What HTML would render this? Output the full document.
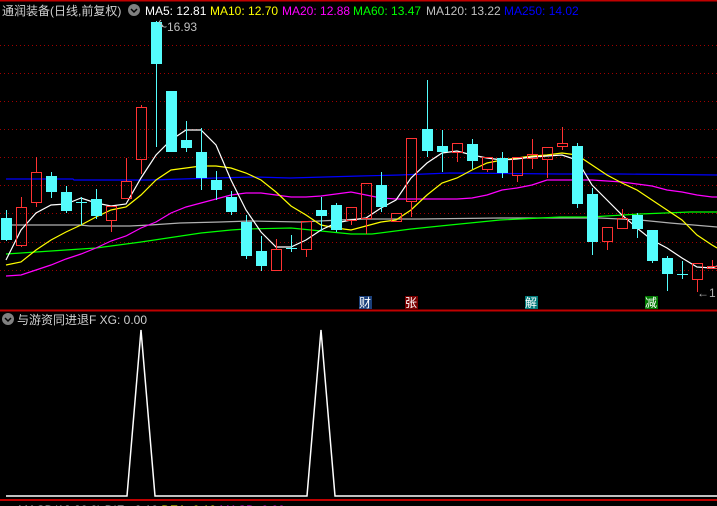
<!DOCTYPE html>
<html><head><meta charset="utf-8"><style>
html,body{margin:0;padding:0;background:#000;width:717px;height:506px;overflow:hidden}
svg{display:block}
text{font-family:"Liberation Sans","Noto Sans CJK SC",sans-serif;font-size:12px}
</style></head><body>
<svg width="717" height="506" xmlns="http://www.w3.org/2000/svg">
<rect width="717" height="506" fill="#000"/>
<line x1="0" y1="0.5" x2="717" y2="0.5" stroke="#c00000" stroke-width="2"/>
<g stroke="#a00000" stroke-dasharray="1,3" stroke-width="1">
<line x1="0" y1="45.5" x2="717" y2="45.5"/><line x1="0" y1="73.5" x2="717" y2="73.5"/>
<line x1="0" y1="101.5" x2="717" y2="101.5"/><line x1="0" y1="129.5" x2="717" y2="129.5"/>
<line x1="0" y1="157.5" x2="717" y2="157.5"/><line x1="0" y1="185.5" x2="717" y2="185.5"/>
<line x1="0" y1="213.5" x2="717" y2="213.5"/><line x1="0" y1="242.5" x2="717" y2="242.5"/>
<line x1="0" y1="270.5" x2="717" y2="270.5"/>
</g>
<!-- header -->
<text x="2" y="15" fill="#d0d0d0" font-size="13">通润装备(日线,前复权)</text>
<circle cx="134" cy="10" r="6" fill="#808080"/><path d="M131 9 L134 12 L137 9" stroke="#000" stroke-width="1.5" fill="none"/>
<text x="145" y="15" fill="#ffffff">MA5: 12.81</text>
<text x="210" y="15" fill="#ffff00">MA10: 12.70</text>
<text x="282" y="15" fill="#ff00ff">MA20: 12.88</text>
<text x="353" y="15" fill="#00ff00">MA60: 13.47</text>
<text x="426" y="15" fill="#c0c0c0">MA120: 13.22</text>
<text x="504" y="15" fill="#0000ff">MA250: 14.02</text>
<!-- MA lines -->
<g fill="none" stroke-width="1.2">
<polyline stroke="#0000ff" points="6,179 73,179 74,180 150,180 215,178 255,177 290,178 360,176 400,175 450,173 560,174 620,174 717,175"/>
<polyline stroke="#b0b0b0" points="6,225 80,225 90,226 130,226 150,225 180,223 220,222 250,221 300,222 360,219 420,219 500,218 560,218 600,218 640,220 670,223 717,227"/>
<polyline stroke="#00ff00" points="6,254 96,248 141,242 201,233 231,230 246,229 291,228 351,234 372,234 411,229 450,225 500,220 560,217 590,217 640,214 690,212 717,212"/>
<polyline stroke="#ff00ff" points="6,276 21,275 36,270 51,265 66,259 81,254 96,248 111,241 126,236 141,228 156,222 171,213 186,207 201,203 216,199 231,195 246,193 261,193 276,195 291,197 306,197 321,196 336,194 351,192 366,195 381,198 396,199 411,199 427,199 442,199 457,199 472,198 487,195 502,190 517,188 532,185 547,180 562,180 577,180 592,180 607,181 622,182 637,184 652,186 667,190 682,192 697,195 712,197 717,197"/>
<polyline stroke="#ffff00" points="6,265 21,262 36,250 51,240 66,232 81,225 96,217 111,210 126,207 141,195 156,180 171,170 186,168 201,166 216,166 231,168 246,173 261,180 276,192 291,206 306,215 321,225 336,228 351,230 366,226 381,222 396,220 411,210 427,195 442,183 457,178 472,170 487,163 502,160 517,158 532,156 547,155 562,153 577,155 592,165 607,175 622,183 637,190 652,200 667,210 682,220 697,235 712,245 717,248"/>
<polyline stroke="#ffffff" points="6,260 21,230 36,213 51,205 66,204 81,198 96,203 111,206 126,204 141,178 156,155 171,140 186,130 201,130 216,145 231,180 246,210 261,232 276,247 291,247 306,240 321,230 336,223 351,220 366,218 381,208 396,200 411,178 427,163 442,153 457,151 472,155 487,158 502,160 517,159 532,157 547,156 562,155 577,160 592,185 607,200 622,215 637,228 652,240 667,248 682,258 697,267 712,268 717,266"/>
</g>
<!-- cyan candles -->
<g fill="#54fcfc" stroke="#54fcfc">
<line x1="6.5" y1="210" x2="6.5" y2="241"/><rect x="1" y="218" width="11" height="22" stroke="none"/>
<line x1="51.5" y1="172" x2="51.5" y2="198"/><rect x="46" y="176" width="11" height="16" stroke="none"/>
<line x1="66.5" y1="186" x2="66.5" y2="213"/><rect x="61" y="192" width="11" height="19" stroke="none"/>
<line x1="81.5" y1="197" x2="81.5" y2="225"/><line x1="76" y1="202.5" x2="87" y2="202.5"/>
<line x1="96.5" y1="189" x2="96.5" y2="219"/><rect x="91" y="199" width="11" height="17" stroke="none"/>
<line x1="156.5" y1="21" x2="156.5" y2="147"/><rect x="151" y="22" width="11" height="42" stroke="none"/>
<rect x="166" y="91" width="11" height="61" stroke="none"/>
<line x1="186.5" y1="121" x2="186.5" y2="152"/><rect x="181" y="140" width="11" height="8" stroke="none"/>
<line x1="201.5" y1="128" x2="201.5" y2="190"/><rect x="196" y="152" width="11" height="26" stroke="none"/>
<line x1="216.5" y1="171" x2="216.5" y2="200"/><rect x="211" y="180" width="11" height="10" stroke="none"/>
<line x1="231.5" y1="191" x2="231.5" y2="215"/><rect x="226" y="197" width="11" height="15" stroke="none"/>
<line x1="246.5" y1="215" x2="246.5" y2="259"/><rect x="241" y="222" width="11" height="34" stroke="none"/>
<line x1="261.5" y1="236" x2="261.5" y2="271"/><rect x="256" y="251" width="11" height="15" stroke="none"/>
<line x1="291.5" y1="235" x2="291.5" y2="252"/><line x1="286" y1="248.5" x2="297" y2="248.5"/>
<line x1="321.5" y1="197" x2="321.5" y2="231"/><rect x="316" y="210" width="11" height="6" stroke="none"/>
<line x1="336.5" y1="203" x2="336.5" y2="232"/><rect x="331" y="205" width="11" height="25" stroke="none"/>
<line x1="381.5" y1="172" x2="381.5" y2="212"/><rect x="376" y="185" width="11" height="22" stroke="none"/>
<line x1="427.5" y1="80" x2="427.5" y2="157"/><rect x="422" y="129" width="11" height="22" stroke="none"/>
<line x1="442.5" y1="130" x2="442.5" y2="172"/><rect x="437" y="146" width="11" height="6" stroke="none"/>
<line x1="472.5" y1="139" x2="472.5" y2="169"/><rect x="467" y="144" width="11" height="17" stroke="none"/>
<line x1="502.5" y1="152" x2="502.5" y2="178"/><rect x="497" y="158" width="11" height="15" stroke="none"/>
<line x1="577.5" y1="143" x2="577.5" y2="208"/><rect x="572" y="146" width="11" height="58" stroke="none"/>
<line x1="592.5" y1="188" x2="592.5" y2="255"/><rect x="587" y="194" width="11" height="48" stroke="none"/>
<line x1="637.5" y1="213" x2="637.5" y2="238"/><rect x="632" y="215" width="11" height="14" stroke="none"/>
<line x1="652.5" y1="230" x2="652.5" y2="263"/><rect x="647" y="230" width="11" height="31" stroke="none"/>
<line x1="667.5" y1="256" x2="667.5" y2="291"/><rect x="662" y="258" width="11" height="16" stroke="none"/>
<line x1="682.5" y1="261" x2="682.5" y2="279"/><line x1="677" y1="274.5" x2="688" y2="274.5"/>
</g>
<!-- red candles -->
<g fill="none" stroke="#ff3232">
<line x1="21.5" y1="197" x2="21.5" y2="207"/><line x1="21.5" y1="246" x2="21.5" y2="247"/><rect x="16.5" y="207.5" width="10" height="38"/>
<line x1="36.5" y1="157" x2="36.5" y2="172"/><line x1="36.5" y1="203" x2="36.5" y2="207"/><rect x="31.5" y="172.5" width="10" height="30"/>
<line x1="111.5" y1="221" x2="111.5" y2="232"/><rect x="106.5" y="206.5" width="10" height="14"/>
<line x1="126.5" y1="158" x2="126.5" y2="181"/><rect x="121.5" y="181.5" width="10" height="17"/>
<line x1="141.5" y1="105" x2="141.5" y2="107"/><line x1="141.5" y1="160" x2="141.5" y2="174"/><rect x="136.5" y="107.5" width="10" height="52"/>
<line x1="276.5" y1="239" x2="276.5" y2="249"/><rect x="271.5" y="249.5" width="10" height="21"/>
<line x1="306.5" y1="250" x2="306.5" y2="257"/><rect x="301.5" y="221.5" width="10" height="28"/>
<line x1="351.5" y1="221" x2="351.5" y2="225"/><rect x="346.5" y="207.5" width="10" height="13"/>
<line x1="366.5" y1="219" x2="366.5" y2="234"/><rect x="361.5" y="183.5" width="10" height="35"/>
<rect x="391.5" y="213.5" width="10" height="8"/>
<line x1="411.5" y1="202" x2="411.5" y2="217"/><rect x="406.5" y="138.5" width="10" height="63"/>
<line x1="457.5" y1="153" x2="457.5" y2="162"/><rect x="452.5" y="143.5" width="10" height="9"/>
<line x1="487.5" y1="170" x2="487.5" y2="172"/><rect x="482.5" y="157.5" width="10" height="12"/>
<line x1="517.5" y1="176" x2="517.5" y2="182"/><rect x="512.5" y="157.5" width="10" height="18"/>
<line x1="532.5" y1="139" x2="532.5" y2="154"/><line x1="532.5" y1="159" x2="532.5" y2="169"/><rect x="527.5" y="154.5" width="10" height="4"/>
<line x1="547.5" y1="160" x2="547.5" y2="178"/><rect x="542.5" y="147.5" width="10" height="12"/>
<line x1="562.5" y1="127" x2="562.5" y2="143"/><line x1="562.5" y1="146" x2="562.5" y2="150"/><rect x="557.5" y="143.5" width="10" height="3"/>
<line x1="607.5" y1="242" x2="607.5" y2="250"/><rect x="602.5" y="227.5" width="10" height="14"/>
<line x1="622.5" y1="209" x2="622.5" y2="218"/><rect x="617.5" y="218.5" width="10" height="10"/>
<line x1="697.5" y1="280" x2="697.5" y2="292"/><rect x="692.5" y="263.5" width="10" height="16"/>
<line x1="712.5" y1="260" x2="712.5" y2="267"/><rect x="707.5" y="266.5" width="10" height="2"/>
</g>
<!-- max label -->
<path d="M159 22 L163 26 M159 22 L161 20" stroke="#c0c0c0" fill="none"/>
<text x="160" y="31" fill="#c0c0c0" font-size="12">~16.93</text>
<text x="697" y="297" fill="#b0b0b0" font-size="12">←1</text>
<!-- tags -->
<rect x="359" y="296" width="13" height="13" fill="#1a3f7a"/><text x="359" y="307" fill="#fff" font-size="12">财</text>
<rect x="405" y="296" width="13" height="13" fill="#7a0000"/><text x="405" y="307" fill="#fff" font-size="12">张</text>
<rect x="525" y="296" width="13" height="13" fill="#007a7a"/><text x="525" y="307" fill="#fff" font-size="12">解</text>
<rect x="645" y="296" width="13" height="13" fill="#007a00"/><text x="645" y="307" fill="#fff" font-size="12">减</text>
<!-- lower panel -->
<line x1="0" y1="310.5" x2="717" y2="310.5" stroke="#c00000" stroke-width="2"/>
<circle cx="8" cy="319" r="6" fill="#808080"/><path d="M5 318 L8 321 L11 318" stroke="#000" stroke-width="1.5" fill="none"/>
<text x="17" y="324" fill="#d0d0d0" font-size="12">与游资同进退F  XG: 0.00</text>
<polyline fill="none" stroke="#ffffff" stroke-width="1.5" points="6,496 127,496 141,330 155,496 307,496 321,330 335,496 717,496"/>
<line x1="0" y1="500" x2="717" y2="500" stroke="#c00000" stroke-width="2"/>
<text x="18" y="514" fill="#d0d0d0" font-size="12">MACD(12,26,9) DIF: -0.10 <tspan fill="#ffff00">DEA: 0.10</tspan> <tspan fill="#ff00ff">MACD: 0.00</tspan></text>
</svg>
</body></html>
